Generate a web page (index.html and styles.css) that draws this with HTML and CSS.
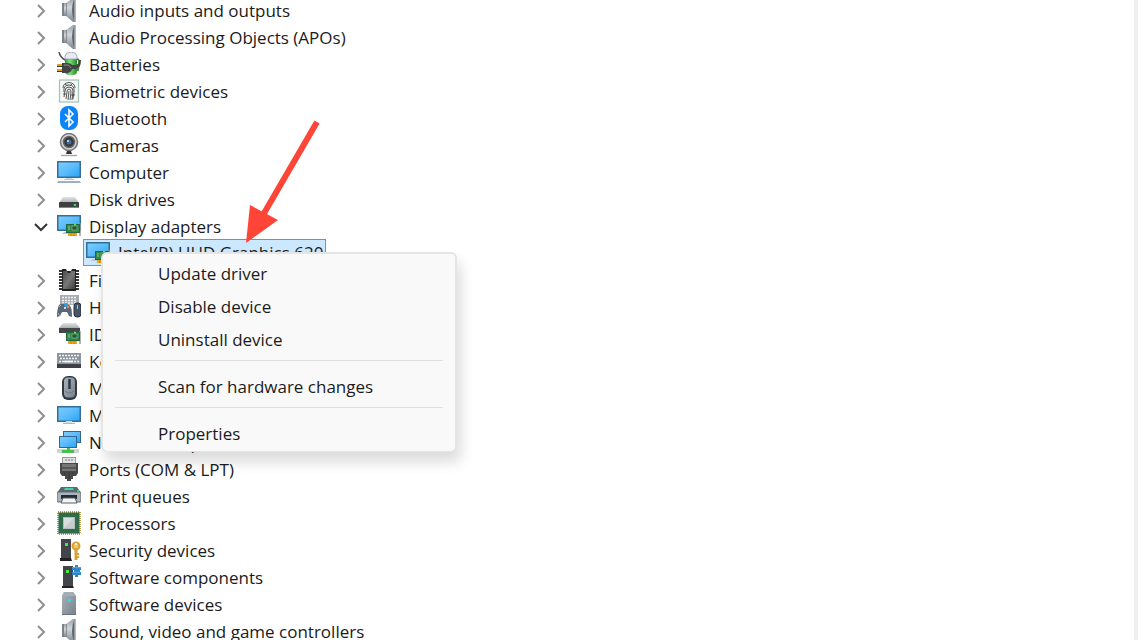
FILE: index.html
```
<!DOCTYPE html>
<html lang="en">
<head>
    <meta charset="UTF-8">
    <meta name="viewport" content="width=device-width, initial-scale=1.0">
    <title>Device Manager</title>
    <link rel="stylesheet" href="styles.css">
</head>
<body>
    <!-- shared icons -->
    <svg class="sprite" aria-hidden="true">
        <defs>
            <linearGradient id="screen" x1="0" y1="0" x2="1" y2="1">
                <stop offset="0" stop-color="#7fcdfc"/>
                <stop offset=".5" stop-color="#5cbcfb"/>
                <stop offset="1" stop-color="#27a2f5"/>
            </linearGradient>
            <linearGradient id="steel" x1="0" y1="0" x2="0" y2="1">
                <stop offset="0" stop-color="#9aa1a8"/>
                <stop offset=".4" stop-color="#d3d6d9"/>
                <stop offset="1" stop-color="#7d868f"/>
            </linearGradient>
            <linearGradient id="silver" x1="0" y1="0" x2="0" y2="1">
                <stop offset="0" stop-color="#e2e4e6"/>
                <stop offset="1" stop-color="#a9adb1"/>
            </linearGradient>
            <linearGradient id="slate" x1="0" y1="0" x2="1" y2="1">
                <stop offset="0" stop-color="#a8b2ba"/>
                <stop offset="1" stop-color="#77828c"/>
            </linearGradient>
            <linearGradient id="green" x1="0" y1="0" x2="1" y2="0">
                <stop offset="0" stop-color="#2f9a35"/>
                <stop offset=".4" stop-color="#7ce07a"/>
                <stop offset="1" stop-color="#27852c"/>
            </linearGradient>
            <linearGradient id="dark" x1="0" y1="0" x2="1" y2="1">
                <stop offset="0" stop-color="#4c4c4c"/>
                <stop offset=".5" stop-color="#777"/>
                <stop offset="1" stop-color="#3c3c3c"/>
            </linearGradient>
        </defs>
        <symbol id="chevron" viewBox="0 0 16 16">
            <path d="M5 2l6 6-6 6" fill="none" stroke="#8f8f8f" stroke-width="2"/>
        </symbol>
        <symbol id="chevron-open" viewBox="0 0 16 16">
            <path d="M2 5l6 6 6-6" fill="none" stroke="#333" stroke-width="2"/>
        </symbol>
        <symbol id="speaker" viewBox="0 0 24 24">
            <path d="M5 5h5v13H5z" fill="url(#steel)"/>
            <path d="M5 5h2v13H5z" fill="#7a828b"/>
            <path d="M9 5l7-5h2v24h-2l-7-6z" fill="url(#steel)"/>
            <path d="M9.500 5v13" stroke="#79818a" stroke-width=".8"/>
            <path d="M17.500 0q-5 12 0 23.500z" fill="#5d656e"/>
            <path d="M18 0v24" stroke="#9aa1a8" stroke-width="1.500"/>
        </symbol>
        <symbol id="battery" viewBox="0 0 24 24">
            <path d="M2 0q1 5 6 8" fill="none" stroke="#555" stroke-width="1.500"/>
            <path d="M18 7q5-1 4 5l-1 6-3-1z" fill="none" stroke="#37843a" stroke-width="1.800"/>
            <rect x="8" y="1" width="12" height="22" rx="4" fill="url(#green)"/>
            <path d="M8 7V4q1-4 6-4t6 4v3z" fill="#e9eaf3" stroke="#9a9db0" stroke-width=".8"/>
            <path d="M0 13h7M0 18h7" stroke="#dba616" stroke-width="2"/>
            <path d="M0 14.500h7M0 19.500h7" stroke="#333"/>
            <path d="M5 11h5q4 0 5 2h4q3-1 3-5h2q0 8-5 9h-4q-1 4-5 4H5z" fill="#444"/>
            <path d="M7 13h4q2 1 3 3" fill="none" stroke="#8b8b8b"/>
        </symbol>
        <symbol id="fingerprint" viewBox="0 0 24 24">
            <rect x="2.500" y="1" width="19" height="22" fill="#f3f8f6" stroke="#a4c0b4" stroke-width="1.200"/>
            <g fill="none" stroke="#555" stroke-width="1">
                <path d="M6 9q0-5 6-5.500Q18 4 18 9"/>
                <path d="M7 13q-1-7 5-7t5 7l-1 7"/>
                <path d="M7 18l1-6q0-4 4-4t4 4l-1 9"/>
                <path d="M9 20l1-7q0-3 2-3t2 3l-1 8"/>
                <path d="M12 12l-1 9M6 15h3M14 16h4M8 5l3 2M15 5l-2 2"/>
            </g>
        </symbol>
        <symbol id="bluetooth" viewBox="0 0 24 24">
            <rect x="3" y="0" width="18" height="24" rx="8" fill="#0a84f8"/>
            <path d="M8 8l8 8-4 4V4l4 4-8 8" fill="none" stroke="#fff" stroke-width="1.600"/>
        </symbol>
        <symbol id="camera" viewBox="0 0 24 24">
            <circle cx="12" cy="9" r="8.500" fill="#d3d3d3" stroke="#777" stroke-width="1.500"/>
            <circle cx="12" cy="9" r="5.500" fill="#343a42" stroke="#666" stroke-width="1.500"/>
            <circle cx="12" cy="9" r="2.500" fill="#426d98"/>
            <circle cx="11" cy="8" r="1" fill="#d3e9ff"/>
            <path d="M10 18h4l1 3H9z" fill="#333"/>
            <path d="M4 22.500h16" stroke="#aaa" stroke-width="1.500"/>
        </symbol>
        <symbol id="computer" viewBox="0 0 24 24">
            <rect x=".75" y="1.750" width="22.500" height="15.500" fill="url(#screen)" stroke="#356f98" stroke-width="1.500"/>
            <path d="M9 18h6v2H9z" fill="#ccd7e2"/>
            <path d="M7 19.500h10" stroke="#b8c7d4"/>
            <path d="M1 21h22l1 2H0z" fill="#9ab0c4"/>
        </symbol>
        <symbol id="disk" viewBox="0 0 24 24">
            <path d="M6 10h12l4 6H2z" fill="url(#silver)"/>
            <rect x="2" y="15" width="20" height="6" rx="1" fill="#3d3f41"/>
            <path d="M2 20.500h20" stroke="#85888b"/>
            <circle cx="18" cy="18" r="1.300" fill="#32e148"/>
        </symbol>
        <symbol id="board" viewBox="0 0 24 24">
            <path d="M23 9v13" stroke="#999" stroke-width="1.500"/>
            <path d="M11 18h9v4h-9z" fill="#f5a40b"/>
            <path d="M14 19v3M17 19v3" stroke="#c98400"/>
            <rect x="9.500" y="10.500" width="13" height="8" fill="#2f8a50" stroke="#22673d"/>
            <path d="M15 12h5v4h-5z" fill="#245239" stroke="#8fb87e" stroke-width=".7"/>
            <path d="M11 13h2M11 15h2" stroke="#8fca80"/>
            <circle cx="18" cy="10.500" r="1" fill="#58f568"/>
        </symbol>
        <symbol id="display" viewBox="0 0 24 24">
            <rect x=".75" y="1.750" width="22.500" height="14.500" fill="url(#screen)" stroke="#356f98" stroke-width="1.500"/>
            <path d="M7 18h5v2H5z" fill="#b4c5d3"/>
            <use href="#board"/>
        </symbol>
        <symbol id="chip" viewBox="0 0 24 24">
            <path d="M4 2v21M20 2v21" stroke="#333" stroke-width="4" stroke-dasharray="2 1"/>
            <path d="M5 1h4l1 2h4l1-2h4v22H5z" fill="#222"/>
            <path d="M6 3h4l1 2h2l1-2h4v18H6z" fill="url(#dark)"/>
        </symbol>
        <symbol id="hid" viewBox="0 0 24 24">
            <rect x="3" y="0" width="19" height="10" fill="#a7adb3"/>
            <path d="M5 2.500h15M5 5.500h15M5 8h15" stroke="#f3f3f3" stroke-width="1.500" stroke-dasharray="2 1"/>
            <path d="M2 10q3-3 10 0 3 1 3 12l-3-1-2-4H5l-2 4-3 1q0-8 2-12z" fill="#596675"/>
            <path d="M2 12l2-2M1 18l2 3" stroke="#a1b0bd"/>
            <circle cx="9" cy="10" r="2" fill="#2e9ded"/>
            <circle cx="11" cy="12" r="1.300" fill="#f18830"/>
            <circle cx="8" cy="13" r="1" fill="#fff"/>
            <rect x="17" y="8" width="7" height="14" rx="3" fill="#485564" stroke="#25313e"/>
            <path d="M20.500 10v4" stroke="#b2bec8"/>
        </symbol>
        <symbol id="ide" viewBox="0 0 24 24">
            <path d="M6 1h13l4 5H2z" fill="url(#silver)"/>
            <rect x="2" y="6" width="21" height="5" fill="#434649"/>
            <use href="#board"/>
        </symbol>
        <symbol id="keyboard" viewBox="0 0 24 24">
            <rect x="0" y="4" width="24" height="12" fill="#8d969e"/>
            <path d="M2 6.500h20M3 9.500h18M2 12.500h20" stroke="#f1f3f5" stroke-width="1.700" stroke-dasharray="2 1"/>
            <path d="M7 12.500h9" stroke="#fff" stroke-width="1.500"/>
            <rect x="0" y="15" width="24" height="4" fill="#3b4147"/>
        </symbol>
        <symbol id="mouse" viewBox="0 0 24 24">
            <rect x="5" y="0" width="15" height="24" rx="6" fill="#303944"/>
            <rect x="7" y="1.500" width="11" height="20" rx="4" fill="url(#slate)"/>
            <path d="M12.500 3v10" stroke="#303943" stroke-width="2.500"/>
            <path d="M8 15q4 4 9 0" fill="none" stroke="#6b7884"/>
        </symbol>
        <symbol id="monitor" viewBox="0 0 24 24">
            <rect x=".75" y="3.750" width="22.500" height="14.500" fill="url(#screen)" stroke="#356f98" stroke-width="1.500"/>
            <path d="M9 18h6v2H9z" fill="#d1dae2"/>
            <path d="M6 20.500h12" stroke="#a8bac9"/>
        </symbol>
        <symbol id="network" viewBox="0 0 24 24">
            <rect x="6.500" y="1.500" width="17" height="11" fill="url(#screen)" stroke="#32688e"/>
            <rect x="2.500" y="6.500" width="17" height="11" fill="url(#screen)" stroke="#32688e"/>
            <path d="M0 19h22v4H0z" fill="#d0d4d2"/>
            <path d="M10 18h3v2h4v3H5v-3h5z" fill="#49bf4d"/>
        </symbol>
        <symbol id="port" viewBox="0 0 24 24">
            <rect x="5.500" y=".5" width="13" height="6" fill="#e2e2e2" stroke="#999"/>
            <path d="M8 3h2M11 3h2M14 3h2" stroke="#777"/>
            <path d="M3 6h18v10l-2 3h-3v3h-2v2h-4v-2H8v-3H5l-2-3z" fill="#484848"/>
            <path d="M5 7h14v7H5z" fill="#777"/>
            <path d="M8 15v3M12 15v7M16 15v3M5 11h14" stroke="#383838"/>
        </symbol>
        <symbol id="printer" viewBox="0 0 24 24">
            <path d="M4 3h16l4 6H0z" fill="#5c6871"/>
            <path d="M8 4h8l1 2H7z" fill="#39d6a1"/>
            <rect x="0" y="8" width="24" height="10" rx="1" fill="#a9b5be" stroke="#606d77"/>
            <path d="M4 11h16v4H4z" fill="#252c32"/>
            <path d="M6 14h12l2 5H4z" fill="#f4f4f4" stroke="#57616b"/>
            <circle cx="21" cy="7" r="1" fill="#49e45b"/>
        </symbol>
        <symbol id="cpu" viewBox="0 0 24 24">
            <rect x="1" y="1" width="22" height="22" fill="none" stroke="#bd9d4c" stroke-width="2" stroke-dasharray="1 1"/>
            <rect x="1.500" y="1.500" width="21" height="21" fill="#2f6c4b"/>
            <rect x="6.500" y="6.500" width="11" height="11" fill="#dadddd" stroke="#b5beb9"/>
            <path d="M7 17l10-10v10z" fill="#c9cccc"/>
        </symbol>
        <symbol id="security" viewBox="0 0 24 24">
            <path d="M4 1h10v19H4z" fill="#42464a"/>
            <path d="M3 20h11l1 3H3z" fill="#222"/>
            <rect x="8" y="5" width="3" height="3" fill="#41ed39"/>
            <path d="M19 8v14" stroke="#d8a136" stroke-width="3"/>
            <path d="M20 16h2M20 19h2" stroke="#d8a136" stroke-width="2"/>
            <circle cx="19" cy="8" r="3.500" fill="#f4c55d" stroke="#d8a136" stroke-width="2"/>
            <circle cx="19" cy="6" r="1" fill="#fff"/>
        </symbol>
        <symbol id="component" viewBox="0 0 24 24">
            <path d="M6 1h10v20H6z" fill="#42464a"/>
            <path d="M5 21h11l1 2H5z" fill="#222"/>
            <rect x="9" y="5" width="3" height="3" fill="#41ed39"/>
            <path d="M15 2h3V0h3v2h3v3h-1v2h1v3h-3v2h-3v-2h-3V7h2V5h-2z" fill="#2c86cc"/>
            <path d="M15 2.500h9M16 7.500h7" stroke="#4fa3e0"/>
        </symbol>
        <symbol id="software" viewBox="0 0 24 24">
            <path d="M7 0h9l3 4v19H5V4z" fill="url(#slate)"/>
            <path d="M7 0h9l3 4H5z" fill="#a5aeb5"/>
            <path d="M5 22.500h14" stroke="#68737d"/>
            <rect x="11" y="7" width="3" height="3" fill="#35d4ed"/>
        </symbol>
    </svg>

    <main class="device-manager">
        <ul class="tree">
            <li class="row">
                <button class="toggle" aria-label="Expand Audio inputs and outputs"><svg class="chevron"><use href="#chevron"/></svg></button>
                <svg class="icon"><use href="#speaker"/></svg>
                <span class="label">Audio inputs and outputs</span>
            </li>
            <li class="row">
                <button class="toggle" aria-label="Expand Audio Processing Objects"><svg class="chevron"><use href="#chevron"/></svg></button>
                <svg class="icon"><use href="#speaker"/></svg>
                <span class="label">Audio Processing Objects (APOs)</span>
            </li>
            <li class="row">
                <button class="toggle" aria-label="Expand Batteries"><svg class="chevron"><use href="#chevron"/></svg></button>
                <svg class="icon"><use href="#battery"/></svg>
                <span class="label">Batteries</span>
            </li>
            <li class="row">
                <button class="toggle" aria-label="Expand Biometric devices"><svg class="chevron"><use href="#chevron"/></svg></button>
                <svg class="icon"><use href="#fingerprint"/></svg>
                <span class="label">Biometric devices</span>
            </li>
            <li class="row">
                <button class="toggle" aria-label="Expand Bluetooth"><svg class="chevron"><use href="#chevron"/></svg></button>
                <svg class="icon"><use href="#bluetooth"/></svg>
                <span class="label">Bluetooth</span>
            </li>
            <li class="row">
                <button class="toggle" aria-label="Expand Cameras"><svg class="chevron"><use href="#chevron"/></svg></button>
                <svg class="icon"><use href="#camera"/></svg>
                <span class="label">Cameras</span>
            </li>
            <li class="row">
                <button class="toggle" aria-label="Expand Computer"><svg class="chevron"><use href="#chevron"/></svg></button>
                <svg class="icon"><use href="#computer"/></svg>
                <span class="label">Computer</span>
            </li>
            <li class="row">
                <button class="toggle" aria-label="Expand Disk drives"><svg class="chevron"><use href="#chevron"/></svg></button>
                <svg class="icon"><use href="#disk"/></svg>
                <span class="label">Disk drives</span>
            </li>
            <li class="row">
                <button class="toggle" aria-label="Collapse Display adapters" aria-expanded="true"><svg class="chevron"><use href="#chevron-open"/></svg></button>
                <svg class="icon"><use href="#display"/></svg>
                <span class="label">Display adapters</span>
            </li>
            <li class="row child">
                <button class="selected">
                    <svg class="icon"><use href="#display"/></svg>
                    <span class="label">Intel(R) UHD Graphics 620</span>
                </button>
            </li>
            <li class="row">
                <button class="toggle" aria-label="Expand Firmware"><svg class="chevron"><use href="#chevron"/></svg></button>
                <svg class="icon"><use href="#chip"/></svg>
                <span class="label">Firmware</span>
            </li>
            <li class="row">
                <button class="toggle" aria-label="Expand Human Interface Devices"><svg class="chevron"><use href="#chevron"/></svg></button>
                <svg class="icon"><use href="#hid"/></svg>
                <span class="label">Human Interface Devices</span>
            </li>
            <li class="row">
                <button class="toggle" aria-label="Expand IDE ATA/ATAPI controllers"><svg class="chevron"><use href="#chevron"/></svg></button>
                <svg class="icon"><use href="#ide"/></svg>
                <span class="label">IDE ATA/ATAPI controllers</span>
            </li>
            <li class="row">
                <button class="toggle" aria-label="Expand Keyboards"><svg class="chevron"><use href="#chevron"/></svg></button>
                <svg class="icon"><use href="#keyboard"/></svg>
                <span class="label">Keyboards</span>
            </li>
            <li class="row">
                <button class="toggle" aria-label="Expand Mice and other pointing devices"><svg class="chevron"><use href="#chevron"/></svg></button>
                <svg class="icon"><use href="#mouse"/></svg>
                <span class="label">Mice and other pointing devices</span>
            </li>
            <li class="row">
                <button class="toggle" aria-label="Expand Monitors"><svg class="chevron"><use href="#chevron"/></svg></button>
                <svg class="icon"><use href="#monitor"/></svg>
                <span class="label">Monitors</span>
            </li>
            <li class="row">
                <button class="toggle" aria-label="Expand Network adapters"><svg class="chevron"><use href="#chevron"/></svg></button>
                <svg class="icon"><use href="#network"/></svg>
                <span class="label">Network adapters</span>
            </li>
            <li class="row">
                <button class="toggle" aria-label="Expand Ports"><svg class="chevron"><use href="#chevron"/></svg></button>
                <svg class="icon"><use href="#port"/></svg>
                <span class="label">Ports (COM &amp; LPT)</span>
            </li>
            <li class="row">
                <button class="toggle" aria-label="Expand Print queues"><svg class="chevron"><use href="#chevron"/></svg></button>
                <svg class="icon"><use href="#printer"/></svg>
                <span class="label">Print queues</span>
            </li>
            <li class="row">
                <button class="toggle" aria-label="Expand Processors"><svg class="chevron"><use href="#chevron"/></svg></button>
                <svg class="icon"><use href="#cpu"/></svg>
                <span class="label">Processors</span>
            </li>
            <li class="row">
                <button class="toggle" aria-label="Expand Security devices"><svg class="chevron"><use href="#chevron"/></svg></button>
                <svg class="icon"><use href="#security"/></svg>
                <span class="label">Security devices</span>
            </li>
            <li class="row">
                <button class="toggle" aria-label="Expand Software components"><svg class="chevron"><use href="#chevron"/></svg></button>
                <svg class="icon"><use href="#component"/></svg>
                <span class="label">Software components</span>
            </li>
            <li class="row">
                <button class="toggle" aria-label="Expand Software devices"><svg class="chevron"><use href="#chevron"/></svg></button>
                <svg class="icon"><use href="#software"/></svg>
                <span class="label">Software devices</span>
            </li>
            <li class="row">
                <button class="toggle" aria-label="Expand Sound, video and game controllers"><svg class="chevron"><use href="#chevron"/></svg></button>
                <svg class="icon"><use href="#speaker"/></svg>
                <span class="label">Sound, video and game controllers</span>
            </li>
        </ul>

        <div class="menu" role="menu">
            <button class="menu-item" role="menuitem">Update driver</button>
            <button class="menu-item" role="menuitem">Disable device</button>
            <button class="menu-item" role="menuitem">Uninstall device</button>
            <hr>
            <button class="menu-item" role="menuitem">Scan for hardware changes</button>
            <hr>
            <button class="menu-item" role="menuitem">Properties</button>
        </div>

        <svg class="arrow" viewBox="0 0 76 124" aria-hidden="true">
            <path d="M72 2L18 95" stroke="#ff4438" stroke-width="6"/>
            <path d="M1 123L5 85l28 15z" fill="#ff4438"/>
        </svg>
    </main>
</body>
</html>
```
FILE: styles.css
```
body {
    margin: 0;
    background: #fff;
    color: #1b1b1b;
    font-family: "Open Sans", "Noto Sans", sans-serif;
    font-size: 17px;
}
button {
    border: 0;
    padding: 0;
    background: none;
    color: inherit;
    font: inherit;
    text-align: left;
}
.sprite {
    position: absolute;
    width: 0;
    height: 0;
}
.device-manager {
    position: relative;
    box-sizing: border-box;
    height: 100vh;
    overflow: hidden;
    border-right: 4px solid #f0f0f0;
}
.tree {
    margin: -4px 0 0;
    padding: 0;
    list-style: none;
}
.row {
    display: flex;
    height: 27px;
    padding-left: 29px;
}
.toggle {
    display: flex;
    align-items: center;
    justify-content: center;
    width: 24px;
    margin-right: 4px;
    padding-top: 2px;
}
.chevron {
    width: 16px;
    height: 16px;
}
.icon {
    flex: none;
    width: 24px;
    height: 24px;
    margin: 2px 8px 0 0;
}
.label {
    line-height: 30px;
    white-space: nowrap;
}
.child {
    padding-left: 83px;
}
.selected {
    display: flex;
    box-sizing: border-box;
    height: 27px;
    padding: 0 2px;
    border: 1px solid #4a9fdc;
    background: #cce8ff;
}
.selected .icon {
    margin-top: 1px;
}
.selected .label {
    line-height: 26px;
}
.menu {
    position: absolute;
    top: 252px;
    left: 101px;
    box-sizing: border-box;
    width: 356px;
    padding: 3px 12px 1px;
    border: 2px solid #e5e5e5;
    border-bottom-width: 1px;
    border-radius: 6px;
    background: #f9f9f9;
    box-shadow: 4px 10px 14px rgba(0, 0, 0, 0.14);
}
.menu-item {
    display: block;
    width: 100%;
    padding-left: 43px;
    line-height: 33px;
}
.menu hr {
    height: 1px;
    margin: 4px 0 9px;
    border: 0;
    background: #e0e0e0;
}
.arrow {
    position: absolute;
    top: 120px;
    left: 245px;
    width: 76px;
    height: 124px;
}
```
